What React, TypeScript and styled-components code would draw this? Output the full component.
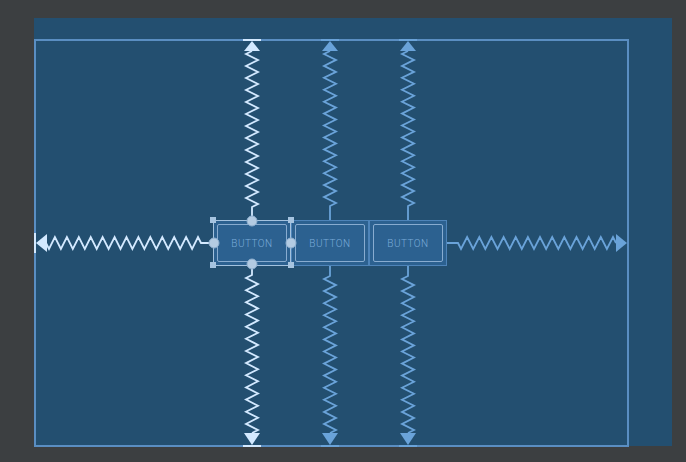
import React from 'react';
import styled, { createGlobalStyle } from 'styled-components';

const GlobalStyle = createGlobalStyle`
  html, body {
    margin: 0;
    padding: 0;
    background: #3c3f41;
  }
  body {
    font-family: Roboto, 'Liberation Sans', sans-serif;
  }
`;

const Screen = styled.div`
  width: 686px;
  height: 462px;
  box-sizing: border-box;
  padding: 18px 0 0 34px;
  background: #3c3f41;
`;

const Blueprint = styled.div`
  width: 638px;
  height: 428px;
  box-sizing: border-box;
  padding-top: 21px;
  background: #234f70;
`;

const Layout = styled.div`
  position: relative;
  width: 595px;
  height: 408px;
  box-sizing: border-box;
  border: 2px solid #5a8ec2;
  padding-right: 3px;
  display: flex;
  align-items: center;
  justify-content: center;
`;

const Chain = styled.div`
  display: flex;
`;

const Widget = styled.div<{ $selected?: boolean }>`
  width: 78px;
  height: 46px;
  box-sizing: border-box;
  padding: 3px;
  background: #2c6190;
  border: 1px solid ${(p) => (p.$selected ? '#a3c2df' : '#4e84b9')};
`;

const Face = styled.div`
  height: 100%;
  box-sizing: border-box;
  border: 1px solid #88acd0;
  border-radius: 2px;
  display: flex;
  align-items: center;
  justify-content: center;
  font-size: 10px;
  font-weight: 300;
  letter-spacing: 0.5px;
  color: #7aabd9;
`;

const Overlay = styled.svg`
  position: absolute;
  left: -2px;
  top: -2px;
  pointer-events: none;
`;

const SELECTED = '#d3e9ff';
const NORMAL = '#6aa3d9';

// polyline for a spring from A to B, with straight leads at both ends
const springPath = (
  ax: number,
  ay: number,
  bx: number,
  by: number,
  leadA: number,
  leadB: number,
  amp = 6,
  period = 12,
) => {
  const total = Math.hypot(bx - ax, by - ay);
  const dx = (bx - ax) / total;
  const dy = (by - ay) / total;
  const nx = -dy;
  const ny = dx;
  const len = total - leadA - leadB;
  const n = Math.max(1, Math.round(len / period));
  const p = len / n;
  const pt = (s: number, o: number) => `${(ax + dx * s + nx * o).toFixed(1)},${(ay + dy * s + ny * o).toFixed(1)}`;
  const pts = [pt(0, 0), pt(leadA, 0)];
  for (let k = 0; k < n; k++) {
    pts.push(pt(leadA + p * (k + 0.25), amp));
    pts.push(pt(leadA + p * (k + 0.75), -amp));
  }
  pts.push(pt(leadA + len, 0));
  pts.push(pt(total, 0));
  return pts.join(' ');
};

const columns = [
  { x: 252, color: SELECTED, top: 221, bottom: 265 },
  { x: 330, color: NORMAL, top: 220, bottom: 266 },
  { x: 408, color: NORMAL, top: 220, bottom: 266 },
];

const handles = [
  [213, 220],
  [291, 220],
  [213, 265],
  [291, 265],
];

const anchors = [
  [252, 221],
  [252, 264],
  [214, 243],
  [291, 243],
];

const Springs = () => (
  <Overlay width={595} height={408} viewBox="34 39 595 408">
    <g fill="none" strokeWidth={1.8} strokeLinejoin="miter">
      {columns.map((c) => (
        <React.Fragment key={c.x}>
          <polyline points={springPath(c.x, 51, c.x, c.top, 0, 14)} stroke={c.color} />
          <polyline points={springPath(c.x, c.bottom, c.x, 433, 10, 0)} stroke={c.color} />
        </React.Fragment>
      ))}
      <polyline points={springPath(46, 243, 214, 243, 0, 13)} stroke={SELECTED} />
      <polyline points={springPath(447, 243, 616, 243, 11, 0)} stroke={NORMAL} />
    </g>
    {columns.map((c) => (
      <g key={c.x} fill={c.color}>
        <rect x={c.x - 9} y={39} width={18} height={2} />
        <polygon points={`${c.x - 8},51 ${c.x + 8},51 ${c.x},41`} />
        <rect x={c.x - 9} y={445} width={18} height={2} />
        <polygon points={`${c.x - 8},433 ${c.x + 8},433 ${c.x},445`} />
      </g>
    ))}
    <rect x={34} y={233} width={2} height={20} fill={SELECTED} />
    <polygon points="47,234 47,252 36,243" fill={SELECTED} />
    <polygon points="616,234 616,252 627,243" fill={NORMAL} />
    {handles.map(([x, y]) => (
      <rect key={`${x}-${y}`} x={x - 3} y={y - 3} width={6} height={6} fill="#a6c4e0" />
    ))}
    {anchors.map(([x, y]) => (
      <circle key={`${x}-${y}`} cx={x} cy={y} r={5} fill="#b3cbe2" stroke="#8eafcf" strokeWidth={1} />
    ))}
  </Overlay>
);

const App = () => (
  <>
    <GlobalStyle />
    <Screen>
      <Blueprint>
        <Layout>
          <Chain>
            <Widget $selected>
              <Face>BUTTON</Face>
            </Widget>
            <Widget>
              <Face>BUTTON</Face>
            </Widget>
            <Widget>
              <Face>BUTTON</Face>
            </Widget>
          </Chain>
          <Springs />
        </Layout>
      </Blueprint>
    </Screen>
  </>
);

export default App;
